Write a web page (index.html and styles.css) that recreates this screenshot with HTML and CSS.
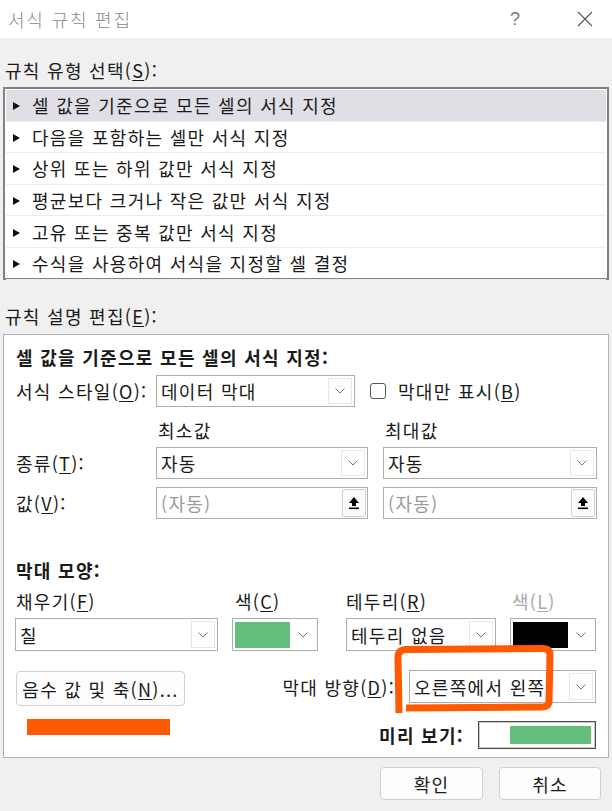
FILE: index.html
```html
<!DOCTYPE html>
<html lang="ko">
<head>
<meta charset="utf-8">
<link rel="stylesheet" href="styles.css">
</head>
<body>
<div class="dialog">
  <div class="titlebar">
    <span class="title">서식 규칙 편집</span>
    <span class="help">?</span>
    <svg class="close" width="16" height="16" viewBox="0 0 16 16"><path d="M1 1L15 15M15 1L1 15" stroke="#555" stroke-width="1.1" fill="none"/></svg>
  </div>
  <div class="body">
    <div class="section-label">규칙 유형 선택(<u>S</u>):</div>
    <ul class="listbox">
      <li class="sel"><span class="tri"></span>셀 값을 기준으로 모든 셀의 서식 지정</li>
      <li><span class="tri"></span>다음을 포함하는 셀만 서식 지정</li>
      <li><span class="tri"></span>상위 또는 하위 값만 서식 지정</li>
      <li><span class="tri"></span>평균보다 크거나 작은 값만 서식 지정</li>
      <li><span class="tri"></span>고유 또는 중복 값만 서식 지정</li>
      <li><span class="tri"></span>수식을 사용하여 서식을 지정할 셀 결정</li>
    </ul>
    <div class="section-label second">규칙 설명 편집(<u>E</u>):</div>
    <div class="panel">
      <div class="panel-head">셀 값을 기준으로 모든 셀의 서식 지정:</div>
      <div class="row row-style">
        <span class="row-label">서식 스타일(<u>O</u>):</span>
        <div class="select w-style"><span class="val">데이터 막대</span><span class="arrow"><svg width="10" height="6" viewBox="0 0 10 6"><path d="M0.5 0.5L5 5L9.5 0.5" stroke="#777" fill="none"/></svg></span></div>
        <span class="checkbox"></span>
        <span class="check-label">막대만 표시(<u>B</u>)</span>
      </div>
      <div class="row row-minmax">
        <span class="mm-label min">최소값</span>
        <span class="mm-label max">최대값</span>
      </div>
      <div class="row row-type">
        <span class="row-label">종류(<u>T</u>):</span>
        <div class="select w-min"><span class="val">자동</span><span class="arrow"><svg width="10" height="6" viewBox="0 0 10 6"><path d="M0.5 0.5L5 5L9.5 0.5" stroke="#777" fill="none"/></svg></span></div>
        <div class="select w-max"><span class="val">자동</span><span class="arrow"><svg width="10" height="6" viewBox="0 0 10 6"><path d="M0.5 0.5L5 5L9.5 0.5" stroke="#777" fill="none"/></svg></span></div>
      </div>
      <div class="row row-value">
        <span class="row-label">값(<u>V</u>):</span>
        <div class="input w-min"><span class="placeholder">(자동)</span><span class="upbtn"><svg width="12" height="14" viewBox="0 0 12 14"><path d="M6 1L11 7H8V10H4V7H1Z" fill="#000"/><rect x="1" y="11.5" width="10" height="1.6" fill="#000"/></svg></span></div>
        <div class="input w-max"><span class="placeholder">(자동)</span><span class="upbtn"><svg width="12" height="14" viewBox="0 0 12 14"><path d="M6 1L11 7H8V10H4V7H1Z" fill="#000"/><rect x="1" y="11.5" width="10" height="1.6" fill="#000"/></svg></span></div>
      </div>
      <div class="sub-head">막대 모양:</div>
      <div class="bar-grid">
        <span class="g-label c1">채우기(<u>F</u>)</span>
        <span class="g-label c2">색(<u>C</u>)</span>
        <span class="g-label c3">테두리(<u>R</u>)</span>
        <span class="g-label c4 disabled">색(<u>L</u>)</span>
        <div class="select tall w-fill"><span class="val">칠</span><span class="arrow"><svg width="10" height="6" viewBox="0 0 10 6"><path d="M0.5 0.5L5 5L9.5 0.5" stroke="#777" fill="none"/></svg></span></div>
        <div class="select tall color"><span class="swatch green"></span><span class="arrow plain"><svg width="10" height="6" viewBox="0 0 10 6"><path d="M0.5 0.5L5 5L9.5 0.5" stroke="#777" fill="none"/></svg></span></div>
        <div class="select tall w-border"><span class="val">테두리 없음</span><span class="arrow"><svg width="10" height="6" viewBox="0 0 10 6"><path d="M0.5 0.5L5 5L9.5 0.5" stroke="#777" fill="none"/></svg></span></div>
        <div class="select tall color"><span class="swatch black"></span><span class="arrow plain"><svg width="10" height="6" viewBox="0 0 10 6"><path d="M0.5 0.5L5 5L9.5 0.5" stroke="#777" fill="none"/></svg></span></div>
      </div>
      <div class="row row-dir">
        <button class="btn neg">음수 값 및 축(<u>N</u>)...</button>
        <div class="dir-group">
          <span class="dir-label">막대 방향(<u>D</u>):</span>
          <div class="select w-dir"><span class="val">오른쪽에서 왼쪽</span><span class="arrow"><svg width="10" height="6" viewBox="0 0 10 6"><path d="M0.5 0.5L5 5L9.5 0.5" stroke="#777" fill="none"/></svg></span>
            <svg class="annot" width="164" height="74" viewBox="0 0 164 74"><path d="M5 68 L4 12 Q4 5 12 4.5 L149 3.5 Q156 3.5 156 10 L155 56 Q155 62 148 62 L12 63" stroke="#ff5a00" stroke-width="7" fill="none" stroke-linejoin="round" stroke-linecap="butt"/></svg>
          </div>
        </div>
      </div>
      <div class="row row-preview">
        <span class="redact"></span>
        <div class="preview-group">
          <span class="preview-label">미리 보기:</span>
          <div class="preview"><span class="preview-bar"></span></div>
        </div>
      </div>
    </div>
    <div class="footer">
      <button class="btn ok">확인</button>
      <button class="btn cancel">취소</button>
    </div>
  </div>
</div>
</body>
</html>
```
FILE: styles.css
```css
* { box-sizing: border-box; }
html, body { margin: 0; padding: 0; }
body {
  width: 612px;
  height: 811px;
  overflow: hidden;
  background: #f0f0f0;
  font-family: "Noto Sans CJK KR", "Noto Sans", sans-serif;
  font-size: 18px;
  letter-spacing: 1.3px;
  color: #1a1a1a;
}
u { text-underline-offset: 2px; text-decoration-thickness: 1px; }

.titlebar {
  height: 38px;
  background: #fff;
  display: flex;
  align-items: center;
  padding-left: 8px;
}
.title { font-size: 18px; color: #8a8a8a; letter-spacing: 1.8px; font-weight: 300; }
.help { margin-left: auto; font-size: 18px; color: #777; font-family: "Liberation Sans", sans-serif; letter-spacing: 0; }
.close { margin-left: 57px; margin-right: 19px; }

.body { padding: 0 3px; }
.section-label { margin-top: 21px; line-height: 22px; padding-left: 2px; }
.section-label.second { margin-top: 25px; }

.listbox {
  list-style: none;
  margin: 6px 0 0;
  padding: 1px;
  height: 193px;
  border: 2px solid #828282;
  background: #fff;
}
.listbox li {
  height: 31.6px;
  display: flex;
  align-items: center;
  border-bottom: 1px solid #ececec;
  padding-left: 7px;
}
.listbox li.sel { background: #dfdfe5; }
.tri {
  width: 0; height: 0;
  border-left: 7px solid #111;
  border-top: 4px solid transparent;
  border-bottom: 4px solid transparent;
  margin-right: 12px;
  margin-top: 2px;
}

.panel {
  margin-top: 7px;
  border: 1px solid #b0b0b0;
  background: #fff;
  padding: 11px 12px 8px 12px;
}
.panel-head, .sub-head { font-weight: 700; line-height: 22px; }
.sub-head { margin-top: 40px; }

.row { display: flex; align-items: center; }
.row-label { width: 140px; flex: none; white-space: nowrap; }
.row-style { margin-top: 7px; height: 32px; }
.row-minmax { margin-top: 12px; line-height: 22px; }
.mm-label.min { margin-left: 142px; width: 227px; }
.row-type { margin-top: 6px; height: 32px; }
.row-value { margin-top: 8px; height: 32px; }

.select, .input {
  position: relative;
  display: flex;
  align-items: center;
  height: 32px;
  border: 1px solid #adadad;
  background: #fff;
  padding-left: 4px;
  flex: none;
}
.select .val { white-space: nowrap; }
.arrow {
  margin-left: auto;
  margin-right: 2px;
  width: 24px;
  height: calc(100% - 4px);
  border: 1px solid #e8e8e8;
  display: flex;
  align-items: center;
  justify-content: center;
  flex: none;
}
.arrow.plain { border-color: #fff; }
.w-style { width: 199px; }
.w-min { width: 212px; }
.w-max { width: 214px; margin-left: 15px; }
.checkbox {
  width: 16px; height: 16px;
  border: 1px solid #5a5a5a;
  border-radius: 3px;
  margin-left: 15px;
  flex: none;
}
.check-label { margin-left: 12px; }

.placeholder { color: #9a9a9a; }
.upbtn {
  margin-left: auto;
  margin-right: 1px;
  width: 24px;
  height: 28px;
  border: 1px solid #cfcfcf;
  border-radius: 2px;
  background: #fbfbfb;
  display: flex;
  align-items: center;
  justify-content: center;
}

.bar-grid {
  margin-top: 9px;
  margin-left: -1px;
  display: grid;
  grid-template-columns: 217px 114px 164px 86px;
  row-gap: 6px;
  justify-items: start;
}
.g-label { line-height: 22px; white-space: nowrap; }
.g-label.c1 { padding-left: 1px; }
.g-label.c2 { padding-left: 3px; }
.g-label.c4 { padding-left: 2px; }
.g-label.disabled { color: #a8a8a8; }
.select.tall { height: 33px; }
.w-fill { width: 203px; }
.w-border { width: 150px; }
.select.color { width: 86px; padding-left: 2px; }
.swatch { width: 55px; height: 26px; flex: none; }
.swatch.green { background: #63be7b; }
.swatch.black { background: #000; }

.row-dir { margin-top: 19px; justify-content: space-between; align-items: flex-start; }
.btn {
  font: inherit;
  letter-spacing: inherit;
  color: #1a1a1a;
  background: #fdfdfd;
  border: 1px solid #d0d0d0;
  border-radius: 4px;
  padding: 0;
}
.btn.neg { width: 169px; height: 35px; margin-top: 1px; white-space: nowrap; }
.dir-group { display: flex; align-items: center; }
.dir-label { margin-right: 14px; white-space: nowrap; }
.w-dir { width: 187px; height: 33px; }
.annot { position: absolute; left: -16.5px; top: -26px; }

.row-preview { justify-content: space-between; align-items: flex-start; }
.redact {
  width: 143px; height: 16px;
  background: #ff5a00;
  margin-top: 13px; margin-left: 11px;
}
.preview-group { display: flex; align-items: center; margin-top: 15px; }
.preview-label { font-weight: 700; margin-right: 14px; }
.preview {
  width: 118px; height: 28px;
  border: 1px solid #4a4a4a;
  box-shadow: inset 0 0 0 1px #c8c8c8;
  background: #fff;
  display: flex;
  justify-content: flex-end;
  align-items: center;
  padding-right: 4px;
}
.preview-bar { width: 81px; height: 18px; background: #63be7b; }

.footer {
  display: flex;
  justify-content: flex-end;
  gap: 16px;
  margin-top: 9px;
  padding-right: 8px;
}
.btn.ok { width: 103px; height: 33px; }
.btn.cancel { width: 102px; height: 33px; }
```
